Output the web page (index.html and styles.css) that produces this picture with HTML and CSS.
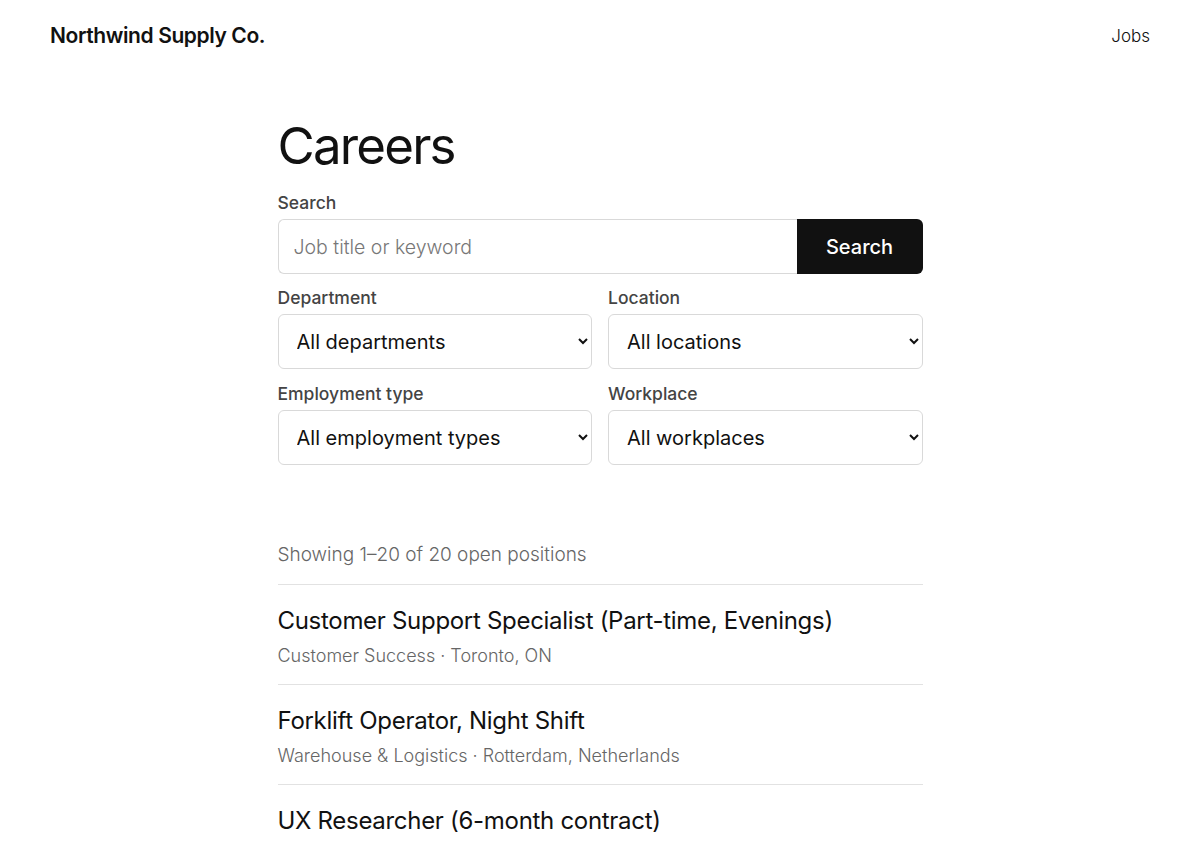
FILE: index.html
```html
<!DOCTYPE html>
<html lang="en">
<head>
  <meta charset="UTF-8" />
  <meta name="viewport" content="width=device-width, initial-scale=1.0" />
  <title>Careers – Northwind Supply Co.</title>
  <link rel="stylesheet" href="styles.css">
</head>
<body>

  <!-- site header -->
  <header class="site-header">
    <a class="brand" href="/">Northwind Supply Co.</a>
    <nav><a href="/jobs">Jobs</a></nav>
  </header>

  <main class="careers">
    <h1>Careers</h1>

    <form class="filters">
      <label class="field">
        <span class="field-label">Search</span>
        <div class="search-row">
          <input type="text" placeholder="Job title or keyword">
          <button type="submit">Search</button>
        </div>
      </label>

      <div class="filter-grid">
        <label class="field">
          <span class="field-label">Department</span>
          <select><option>All departments</option></select>
        </label>
        <label class="field">
          <span class="field-label">Location</span>
          <select><option>All locations</option></select>
        </label>
        <label class="field">
          <span class="field-label">Employment type</span>
          <select><option>All employment types</option></select>
        </label>
        <label class="field">
          <span class="field-label">Workplace</span>
          <select><option>All workplaces</option></select>
        </label>
      </div>
    </form>

    <p class="result-count">Showing 1–20 of 20 open positions</p>

    <ul class="job-list">
      <li>
        <a href="#">Customer Support Specialist (Part-time, Evenings)</a>
        <div class="job-meta">Customer Success · Toronto, ON</div>
      </li>
      <li>
        <a href="#">Forklift Operator, Night Shift</a>
        <div class="job-meta">Warehouse &amp; Logistics · Rotterdam, Netherlands</div>
      </li>
      <li>
        <a href="#">UX Researcher (6-month contract)</a>
        <div class="job-meta">Design · Remote</div>
      </li>
    </ul>
  </main>

</body>
</html>
```

FILE: styles.css
```css
:root {
  --text: #111;
  --muted: #666;
  --label: #444;
  --line: #e2e2e2;
  --border: #d9d9d9;
}

* {
  box-sizing: border-box;
}

body {
  margin: 0;
  font-family: Inter, 'Noto Sans', sans-serif;
  color: var(--text);
  background: #fff;
}

a {
  color: inherit;
  text-decoration: none;
}

.site-header {
  display: flex;
  justify-content: space-between;
  align-items: center;
  padding: 23px 50px 21px;
}

.brand {
  font-size: 21px;
  font-weight: 600;
  letter-spacing: -0.4px;
}

.site-header nav a {
  font-size: 17px;
  font-weight: 300;
}

.careers {
  width: 645px;
  margin: 0 auto;
  padding-top: 49px;
}

.careers h1 {
  font-size: 51px;
  font-weight: 400;
  letter-spacing: -1.8px;
  margin: 0 0 18px;
  line-height: 1.1;
}

.field {
  display: flex;
  flex-direction: column;
  gap: 6px;
}

.field-label {
  font-size: 17.5px;
  font-weight: 500;
  color: var(--label);
}

.search-row {
  display: flex;
  height: 55px;
}

.search-row input {
  flex: 1;
  font: inherit;
  font-size: 19.5px;
  font-weight: 300;
  padding: 0 15px;
  border: 1px solid var(--border);
  border-right: none;
  border-radius: 6px 0 0 6px;
}

.search-row input::placeholder {
  color: #777;
}

.search-row button {
  width: 126px;
  font: inherit;
  font-size: 20px;
  font-weight: 500;
  color: #fff;
  background: #111;
  border: none;
  border-radius: 0 6px 6px 0;
}

.filter-grid {
  display: grid;
  grid-template-columns: 1fr 1fr;
  gap: 14px 16px;
  margin-top: 13px;
}

.filter-grid select {
  height: 55px;
  font: inherit;
  font-size: 20px;
  font-weight: 400;
  color: var(--text);
  padding: 0 14px;
  background: #fff;
  border: 1px solid var(--border);
  border-radius: 6px;
}

.result-count {
  margin: 78px 0 18px;
  font-size: 19px;
  font-weight: 300;
  color: var(--muted);
}

.job-list {
  list-style: none;
  margin: 0;
  padding: 0;
}

.job-list li {
  border-top: 1px solid var(--line);
  padding: 21px 0 18px;
}

.job-list li a {
  display: block;
  font-size: 24px;
  font-weight: 400;
  letter-spacing: -0.3px;
}

.job-meta {
  margin-top: 10px;
  font-size: 18px;
  font-weight: 300;
  color: var(--muted);
}
```
